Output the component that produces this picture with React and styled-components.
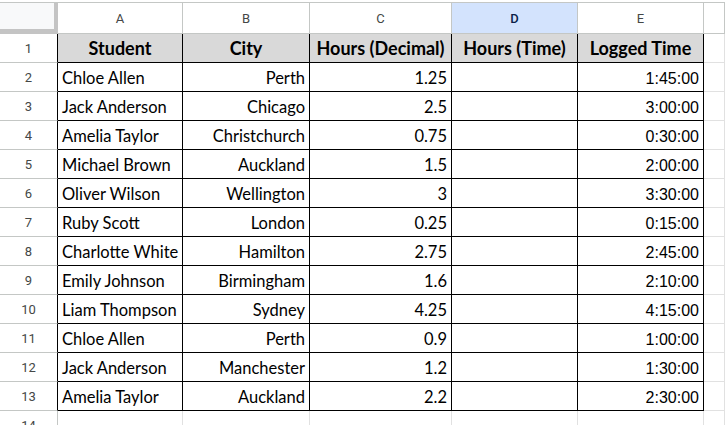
import React from "react";
import styled, { createGlobalStyle } from "styled-components";

// Таблица учёта часов студентов

const rows = [
  ["Chloe Allen", "Perth", "1.25", "", "1:45:00"],
  ["Jack Anderson", "Chicago", "2.5", "", "3:00:00"],
  ["Amelia Taylor", "Christchurch", "0.75", "", "0:30:00"],
  ["Michael Brown", "Auckland", "1.5", "", "2:00:00"],
  ["Oliver Wilson", "Wellington", "3", "", "3:30:00"],
  ["Ruby Scott", "London", "0.25", "", "0:15:00"],
  ["Charlotte White", "Hamilton", "2.75", "", "2:45:00"],
  ["Emily Johnson", "Birmingham", "1.6", "", "2:10:00"],
  ["Liam Thompson", "Sydney", "4.25", "", "4:15:00"],
  ["Chloe Allen", "Perth", "0.9", "", "1:00:00"],
  ["Jack Anderson", "Manchester", "1.2", "", "1:30:00"],
  ["Amelia Taylor", "Auckland", "2.2", "", "2:30:00"],
];

const headers = ["Student", "City", "Hours (Decimal)", "Hours (Time)", "Logged Time"];
const letters = ["A", "B", "C", "D", "E"];

const App = () => {
  return (
    <>
      <GlobalStyle />
      <Sheet>
        <Corner />
        {letters.map((l) => (
          <ColHead key={l} selected={l === "D"}>{l}</ColHead>
        ))}
        <ColHead />

        <RowHead dark>1</RowHead>
        {headers.map((h) => (
          <TitleCell key={h}>{h}</TitleCell>
        ))}
        <EmptyCell />

        {rows.map((r, i) => (
          <React.Fragment key={i}>
            <RowHead dark>{i + 2}</RowHead>
            <Cell>{r[0]}</Cell>
            <Cell right>{r[1]}</Cell>
            <Cell right>{r[2]}</Cell>
            <Cell right>{r[3]}</Cell>
            <Cell right time>{r[4]}</Cell>
            <EmptyCell />
          </React.Fragment>
        ))}

        <RowHead>14</RowHead>
        {letters.map((l) => (
          <EmptyCell key={l} />
        ))}
        <EmptyCell />
      </Sheet>
    </>
  );
};
export default App;

const GlobalStyle = createGlobalStyle`
  body {
    margin: 0;
    padding-top: 2px;
    background: #fff;
    overflow: hidden;
  }
`

const Sheet = styled.div`
  display: grid;
  grid-template-columns: 58px 125px 127px 142px 126px 126px 1fr;
  grid-template-rows: 31px repeat(13, 29px) 29px;
  border-top: 1px solid #c4c7c5;
  & > * {
    box-sizing: border-box;
  }
`

const Corner = styled.div`
  background: #f8f9fa;
  border-right: 4px solid #c4c4c4;
  border-bottom: 5px solid #c4c4c4;
`

const ColHead = styled.div`
  display: flex;
  align-items: center;
  justify-content: center;
  font-family: Roboto, "Liberation Sans", sans-serif;
  font-size: 13px;
  color: ${p => p.selected ? '#0b1f4a' : '#444746'};
  font-weight: ${p => p.selected ? 500 : 400};
  background: ${p => p.selected ? '#d3e3fd' : '#fff'};
  border-right: 1px solid #c4c7c5;
  border-bottom: 1px solid #c4c7c5;
`

const RowHead = styled.div`
  display: flex;
  align-items: center;
  justify-content: center;
  font-family: Roboto, "Liberation Sans", sans-serif;
  font-size: 13px;
  color: #444746;
  border-right: 1px solid ${p => p.dark ? '#000' : '#c4c7c5'};
  border-bottom: 1px solid #c4c7c5;
`

const TitleCell = styled.div`
  display: flex;
  align-items: flex-end;
  justify-content: center;
  padding-bottom: 3px;
  background: #d9d9d9;
  font-family: Lato, "Open Sans", sans-serif;
  font-weight: 700;
  font-size: 18px;
  color: #000;
  white-space: nowrap;
  border-right: 1px solid #000;
  border-bottom: 1px solid #000;
`

const Cell = styled.div`
  display: flex;
  align-items: flex-end;
  justify-content: ${p => p.right ? 'flex-end' : 'flex-start'};
  padding: 0 4px 3px 4px;
  font-family: ${p => p.time ? '"Liberation Sans", Arial' : 'Lato, "Open Sans"'}, sans-serif;
  font-size: ${p => p.time ? '16px' : '16.5px'};
  color: #000;
  white-space: nowrap;
  border-right: 1px solid #000;
  border-bottom: 1px solid #000;
`

const EmptyCell = styled.div`
  border-right: 1px solid #e1e1e1;
  border-bottom: 1px solid #e1e1e1;
`
